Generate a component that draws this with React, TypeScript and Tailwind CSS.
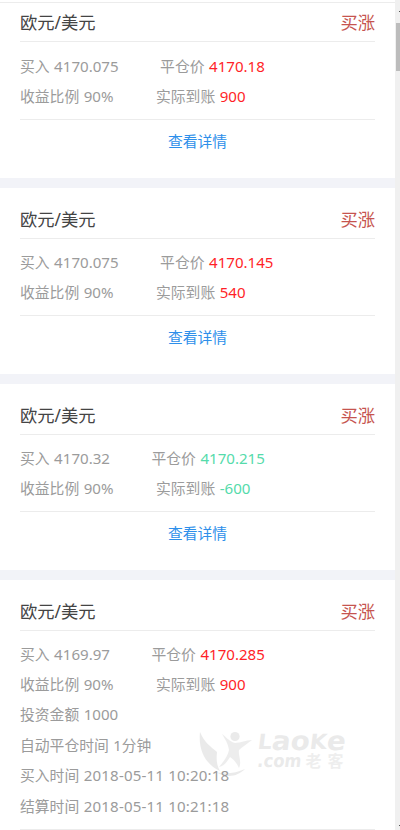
import clsx from "clsx";

interface Order {
  buy: string;
  close: string;
  ratio: string;
  income: string;
  loss?: boolean;
  details?: { label: string; value: string }[];
}

const orders: Order[] = [
  { buy: "4170.075", close: "4170.18", ratio: "90%", income: "900" },
  { buy: "4170.075", close: "4170.145", ratio: "90%", income: "540" },
  { buy: "4170.32", close: "4170.215", ratio: "90%", income: "-600", loss: true },
  {
    buy: "4169.97",
    close: "4170.285",
    ratio: "90%",
    income: "900",
    details: [
      { label: "投资金额", value: "1000" },
      { label: "自动平仓时间", value: "1分钟" },
      { label: "买入时间", value: "2018-05-11 10:20:18" },
      { label: "结算时间", value: "2018-05-11 10:21:18" },
    ],
  },
];

function Field({ label, value, className }: { label: string; value: string; className?: string }) {
  return (
    <div className="flex gap-[4.5px]">
      <span>{label}</span>
      <span
        className={clsx(
          value.endsWith("分钟") ? "text-[14.7px]" : "text-[15.1px]",
          value.includes(":") && "tracking-[0.16px]",
          className,
        )}
      >
        {value}
      </span>
    </div>
  );
}

function OrderCard({ order, first }: { order: Order; first: boolean }) {
  const color = order.loss ? "text-[#55dbab]" : "text-[#ff1f28]";

  return (
    <section className={clsx("shrink-0 bg-white px-5", first ? "h-[175px]" : "h-[186px]", order.details && "h-[260px]")}>
      <header
        className={clsx(
          "flex items-center justify-between border-b border-[#ececec] text-[17.3px]",
          first ? "h-[39px] pt-0.5" : "h-[51px] pt-3.5",
        )}
      >
        <span className="text-[#444]">欧元/美元</span>
        <span className="text-[#c6544f]">买涨</span>
      </header>
      <div
        className={clsx(
          "border-b border-[#ececec] text-[14.8px] leading-[30.4px] text-[#9b9b9b]",
          first ? "pt-[9px] pb-[7px]" : "pt-[7.5px] pb-[8px]",
        )}
      >
        <div className="flex gap-[41.5px]">
          <Field label="买入" value={order.buy} />
          <Field label="平仓价" value={order.close} className={color} />
        </div>
        <div className="flex gap-[42.5px]">
          <Field label="收益比例" value={order.ratio} />
          <Field label="实际到账" value={order.income} className={color} />
        </div>
        {order.details?.map((item) => (
          <Field key={item.label} label={item.label} value={item.value} />
        ))}
      </div>
      {!order.details && (
        <a className="block pt-[10px] text-center text-[14.8px] leading-[22px] text-[#2d8fea]">查看详情</a>
      )}
    </section>
  );
}

function Watermark() {
  return (
    <svg className="pointer-events-none absolute top-[725px] left-[195px]" width="160" height="60" fill="#808080" opacity="0.16">
      <path d="M5 7C9 17 16 22 22 27C21 35 22 41 25 46C12 40 3 27 5 7Z" />
      <path d="M21 47C31 50 41 48 50 44C43 51 32 54 21 47Z" />
      <circle cx="40" cy="11.5" r="4.6" />
      <path d="M27 9C31 12 35 17 40 18C46 18 51 15 57 15C52 19 47 22 44 25C43 31 47 36 44 43C42 38 38 34 35 32C32 37 29 41 24 42C29 36 33 31 34 25C33 18 30 14 27 9Z" opacity="0.85" />
      <g fontFamily="DejaVu Sans" fontWeight="700" transform="skewX(-7)">
        <text x="65" y="24.5" fontSize="21" textLength="88" lengthAdjust="spacingAndGlyphs">
          L<tspan fontSize="26.5">ao</tspan>K<tspan fontSize="26.5">e</tspan>
        </text>
        <text x="67" y="42" fontSize="18" textLength="44" lengthAdjust="spacingAndGlyphs">
          .com
        </text>
      </g>
      <text x="110.5" y="41.5" fontSize="16" fontWeight="700" letterSpacing="6" fontFamily="Noto Sans CJK SC" opacity="0.8">
        老客
      </text>
    </svg>
  );
}

export default function App() {
  return (
    <div className="relative flex h-[830px] overflow-hidden bg-[#f2f3f8] font-['Noto_Sans','Noto_Sans_CJK_SC',sans-serif]">
      <main className="flex w-[395px] flex-col overflow-hidden">
        <div className="h-[3px] shrink-0 border-b border-[#ececec] bg-white" />
        <div className="flex flex-col gap-2.5">
          {orders.map((order, i) => (
            <OrderCard key={i} order={order} first={i === 0} />
          ))}
        </div>
      </main>
      <aside className="flex w-[5px] flex-col items-end justify-between bg-[#f0f0f0]">
        <div className="flex flex-col items-end">
          <div className="mt-[11px] h-px w-px bg-[#555]" />
          <div className="mt-[11px] h-12 w-1 bg-[#bcbcbc]" />
        </div>
        <div className="mb-1 h-px w-px bg-[#555]" />
      </aside>
      <Watermark />
    </div>
  );
}
